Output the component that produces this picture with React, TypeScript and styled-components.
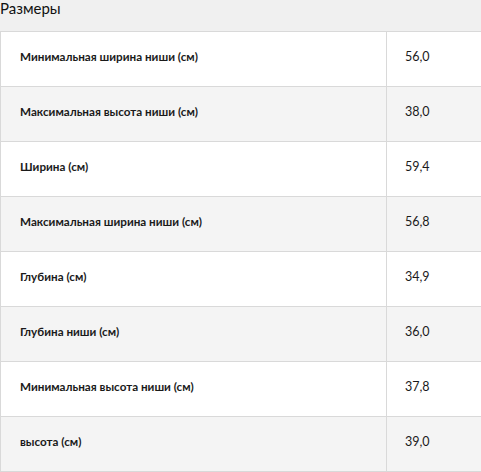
import React from "react";
import styled, { createGlobalStyle } from "styled-components";

const Global = createGlobalStyle`
  html, body { margin: 0; padding: 0; background: #f0f0f0; overflow: hidden; }
  body { font-family: Lato, "Open Sans", sans-serif; color: #1a1a1a; }
`;

const Page = styled.div`
  width: 481px;
  height: 472px;
  overflow: hidden;
`;

const Heading = styled.h2`
  margin: 0;
  height: 31px;
  font-size: 15px;
  font-weight: 400;
  line-height: 17px;
  color: #111;
  box-sizing: border-box;
`;

const Table = styled.div`
  width: 540px;
  border-top: 1px solid #d9d9d9;
  border-left: 1px solid #d9d9d9;
`;

const Row = styled.div<{ $alt: boolean }>`
  display: grid;
  grid-template-columns: 386px 1fr;
  height: 55px;
  box-sizing: border-box;
  border-bottom: 1px solid #d9d9d9;
  background: ${(p) => (p.$alt ? "#f4f4f4" : "#ffffff")};
`;

const Label = styled.div`
  display: flex;
  align-items: center;
  padding-left: 19px;
  font-size: 11.7px;
  font-weight: 700;
  border-right: 1px solid #d9d9d9;
  padding-bottom: 6px;
`;

const Value = styled.div`
  display: flex;
  align-items: center;
  padding-left: 18px;
  font-size: 12.5px;
  font-weight: 400;
  padding-bottom: 6px;
`;

const rows: [string, string][] = [
  ["Минимальная ширина ниши (см)", "56,0"],
  ["Максимальная высота ниши (см)", "38,0"],
  ["Ширина (см)", "59,4"],
  ["Максимальная ширина ниши (см)", "56,8"],
  ["Глубина (см)", "34,9"],
  ["Глубина ниши (см)", "36,0"],
  ["Минимальная высота ниши (см)", "37,8"],
  ["высота (см)", "39,0"],
];

export default function App() {
  return (
    <Page>
      <Global />
      <Heading>Размеры</Heading>
      <Table>
        {rows.map(([k, v], i) => (
          <Row key={k} $alt={i % 2 === 1}>
            <Label>{k}</Label>
            <Value>{v}</Value>
          </Row>
        ))}
      </Table>
    </Page>
  );
}
